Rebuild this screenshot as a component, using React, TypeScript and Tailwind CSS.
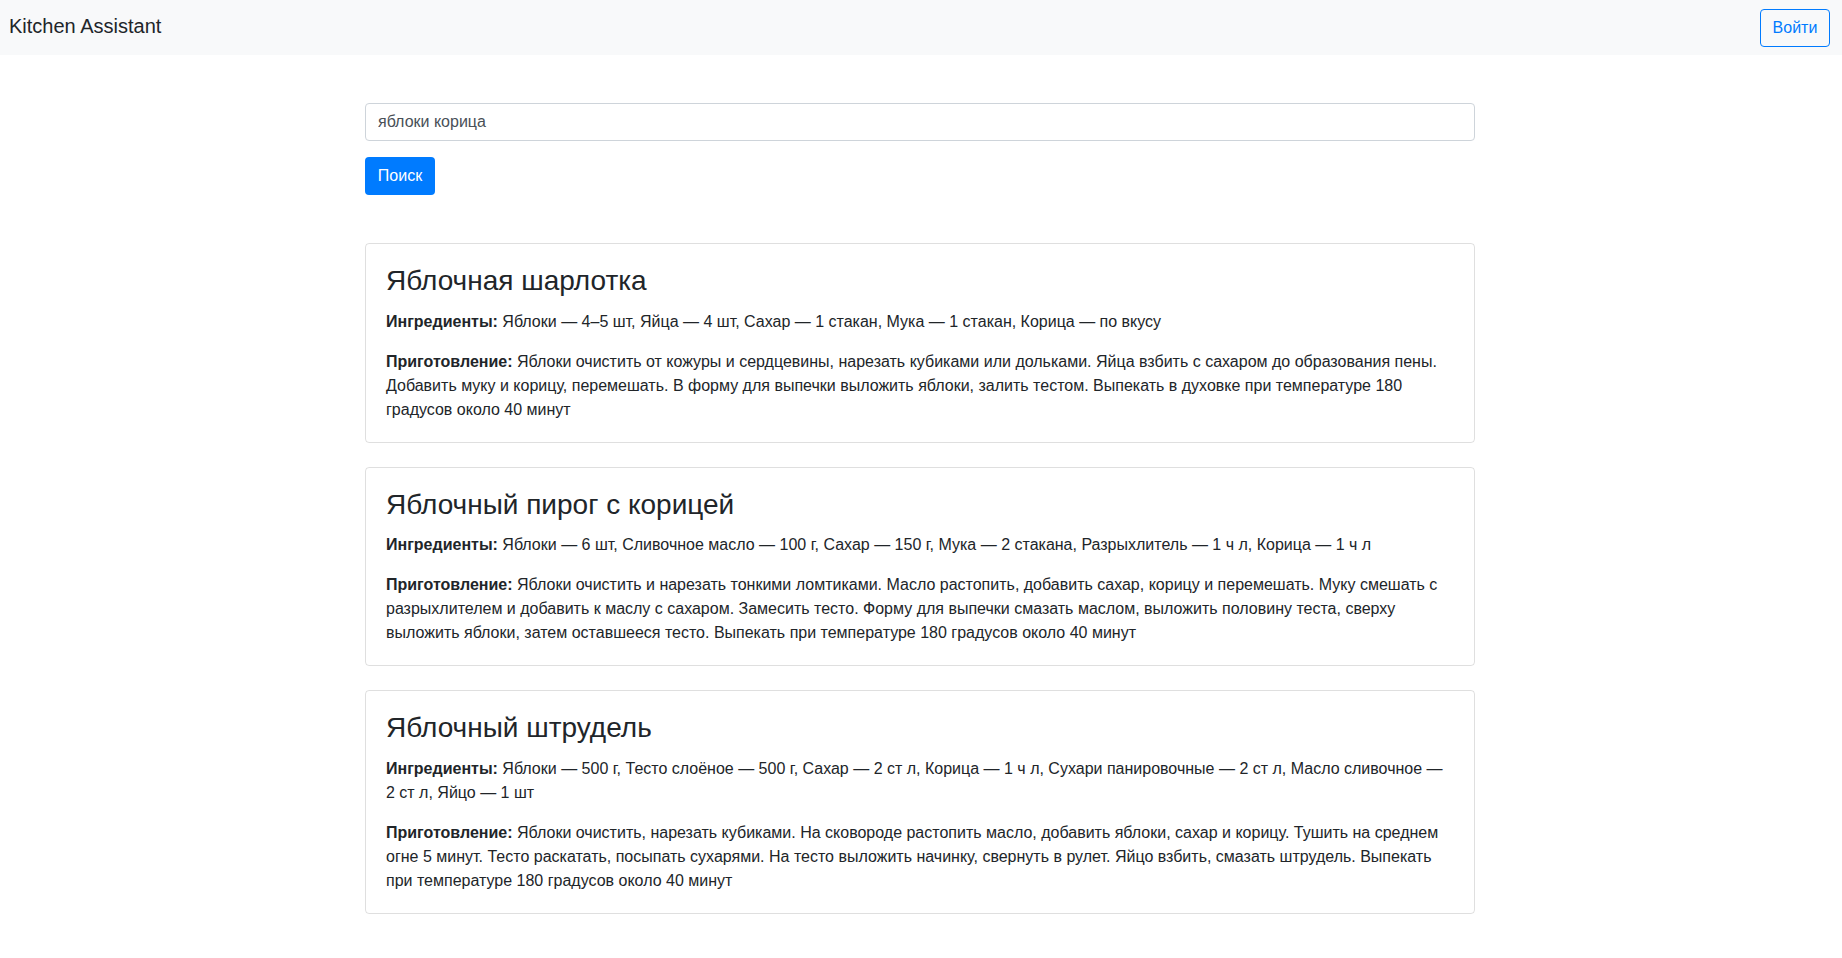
const recipes = [
  {
    title: "Яблочная шарлотка",
    ingredients:
      "Яблоки — 4–5 шт, Яйца — 4 шт, Сахар — 1 стакан, Мука — 1 стакан, Корица — по вкусу",
    steps:
      "Яблоки очистить от кожуры и сердцевины, нарезать кубиками или дольками. Яйца взбить с сахаром до образования пены. Добавить муку и корицу, перемешать. В форму для выпечки выложить яблоки, залить тестом. Выпекать в духовке при температуре 180 градусов около 40 минут",
  },
  {
    title: "Яблочный пирог с корицей",
    ingredients:
      "Яблоки — 6 шт, Сливочное масло — 100 г, Сахар — 150 г, Мука — 2 стакана, Разрыхлитель — 1 ч л, Корица — 1 ч л",
    steps:
      "Яблоки очистить и нарезать тонкими ломтиками. Масло растопить, добавить сахар, корицу и перемешать. Муку смешать с разрыхлителем и добавить к маслу с сахаром. Замесить тесто. Форму для выпечки смазать маслом, выложить половину теста, сверху выложить яблоки, затем оставшееся тесто. Выпекать при температуре 180 градусов около 40 минут",
  },
  {
    title: "Яблочный штрудель",
    ingredients:
      "Яблоки — 500 г, Тесто слоёное — 500 г, Сахар — 2 ст л, Корица — 1 ч л, Сухари панировочные — 2 ст л, Масло сливочное — 2 ст л, Яйцо — 1 шт",
    steps:
      "Яблоки очистить, нарезать кубиками. На сковороде растопить масло, добавить яблоки, сахар и корицу. Тушить на среднем огне 5 минут. Тесто раскатать, посыпать сухарями. На тесто выложить начинку, свернуть в рулет. Яйцо взбить, смазать штрудель. Выпекать при температуре 180 градусов около 40 минут",
  },
];

const App = () => {
  return (
    <div className="min-h-screen bg-white text-[#212529] text-base leading-normal font-['Liberation_Sans',Arial,sans-serif]">
      <nav className="h-[55px] bg-[#f8f9fa] flex items-center justify-between pl-[9px] pr-[12px]">
        <a href="#" className="text-xl text-[#212529] mb-[4px]">
          Kitchen Assistant
        </a>
        <button className="h-[38px] w-[70px] border border-[#007bff] text-[#007bff] rounded-[4px] text-base">
          Войти
        </button>
      </nav>

      <main className="max-w-[1140px] mx-auto pl-[14px] pr-[16px] pt-12">
        <form className="mb-12" onSubmit={(e) => e.preventDefault()}>
          <input
            type="text"
            defaultValue="яблоки корица"
            className="block w-full h-[38px] px-3 border border-[#ced4da] rounded-[4px] text-[#495057] text-base mb-4 outline-none"
          />
          <button className="h-[38px] w-[70px] bg-[#007bff] text-white rounded-[4px] text-base">
            Поиск
          </button>
        </form>

        {recipes.map((r) => (
          <div key={r.title} className="border border-black/[0.125] rounded-[4px] mb-6 p-5">
            <h3 className="text-[28px] leading-[1.2] font-medium mb-3">{r.title}</h3>
            <p className="mb-4">
              <strong className="font-bold">Ингредиенты:</strong> {r.ingredients}
            </p>
            <p>
              <strong className="font-bold">Приготовление:</strong> {r.steps}
            </p>
          </div>
        ))}
      </main>
    </div>
  );
};

export default App;
